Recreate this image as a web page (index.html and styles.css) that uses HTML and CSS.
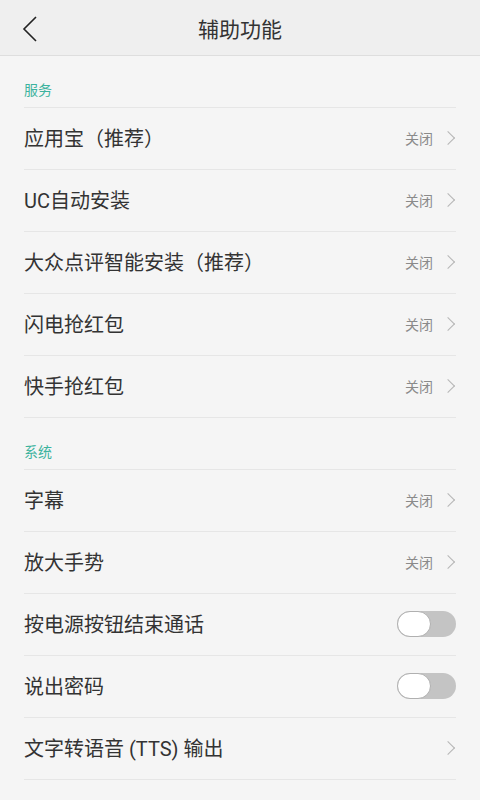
FILE: index.html
```html
<!DOCTYPE html>
<html lang="zh-CN">
<head>
<meta charset="UTF-8">
<meta name="viewport" content="width=device-width, initial-scale=1.0">
<title>辅助功能</title>
<link rel="stylesheet" href="styles.css">
</head>
<body>
    <div class="topbar">
        <svg class="back" width="16" height="28" viewBox="0 0 16 28">
            <polyline points="14,2 2,14 14,26" fill="none" stroke="#222" stroke-width="1.6"/>
        </svg>
        <div class="title">辅助功能</div>
    </div>
    <div class="list">
        <div class="section">服务</div>
        <div class="row"><span class="label">应用宝（推荐）</span><span class="state">关闭</span><span class="arrow"></span></div>
        <div class="row"><span class="label">UC自动安装</span><span class="state">关闭</span><span class="arrow"></span></div>
        <div class="row"><span class="label">大众点评智能安装（推荐）</span><span class="state">关闭</span><span class="arrow"></span></div>
        <div class="row"><span class="label">闪电抢红包</span><span class="state">关闭</span><span class="arrow"></span></div>
        <div class="row"><span class="label">快手抢红包</span><span class="state">关闭</span><span class="arrow"></span></div>
        <div class="section">系统</div>
        <div class="row"><span class="label">字幕</span><span class="state">关闭</span><span class="arrow"></span></div>
        <div class="row"><span class="label">放大手势</span><span class="state">关闭</span><span class="arrow"></span></div>
        <div class="row"><span class="label">按电源按钮结束通话</span><span class="switch"></span></div>
        <div class="row"><span class="label">说出密码</span><span class="switch"></span></div>
        <div class="row"><span class="label">文字转语音 (TTS) 输出</span><span class="arrow"></span></div>
    </div>
</body>
</html>
```

FILE: styles.css
```css
body {
    margin: 0;
    padding: 0;
    background-color: #f5f5f5;
    font-family: Roboto, "Noto Sans CJK SC", sans-serif;
    color: #333;
}
.topbar {
    height: 55px;
    background-color: #efefef;
    border-bottom: 1px solid #dedede;
    display: flex;
    align-items: center;
    justify-content: center;
    position: relative;
}
.back {
    position: absolute;
    left: 22px;
    top: 15px;
}
.title {
    font-size: 21px;
    color: #333;
}
.list {
    padding: 0 24px;
}
.section {
    height: 52px;
    box-sizing: border-box;
    padding-top: 24px;
    line-height: 20px;
    font-size: 14px;
    color: #3db39e;
    border-bottom: 1px solid #e6e6e6;
}
.row {
    height: 62px;
    box-sizing: border-box;
    padding-bottom: 2px;
    border-bottom: 1px solid #e6e6e6;
    display: flex;
    align-items: center;
}
.label {
    flex: 1;
    font-size: 20px;
    color: #333;
}
.state {
    font-size: 14px;
    color: #8a8a8a;
    margin-right: 10px;
}
.arrow {
    width: 9px;
    height: 9px;
    border-top: 1.5px solid #b5b5b5;
    border-right: 1.5px solid #b5b5b5;
    transform: rotate(45deg);
    margin-right: 3px;
}
.switch {
    width: 59px;
    height: 26px;
    box-sizing: border-box;
    border-radius: 13px;
    background-color: #c4c4c4;
    position: relative;
}
.switch::before {
    content: "";
    position: absolute;
    left: 0;
    top: 0;
    width: 34px;
    height: 26px;
    box-sizing: border-box;
    border-radius: 13px;
    background-color: #fff;
    border: 1px solid #b0b0b0;
}
```
